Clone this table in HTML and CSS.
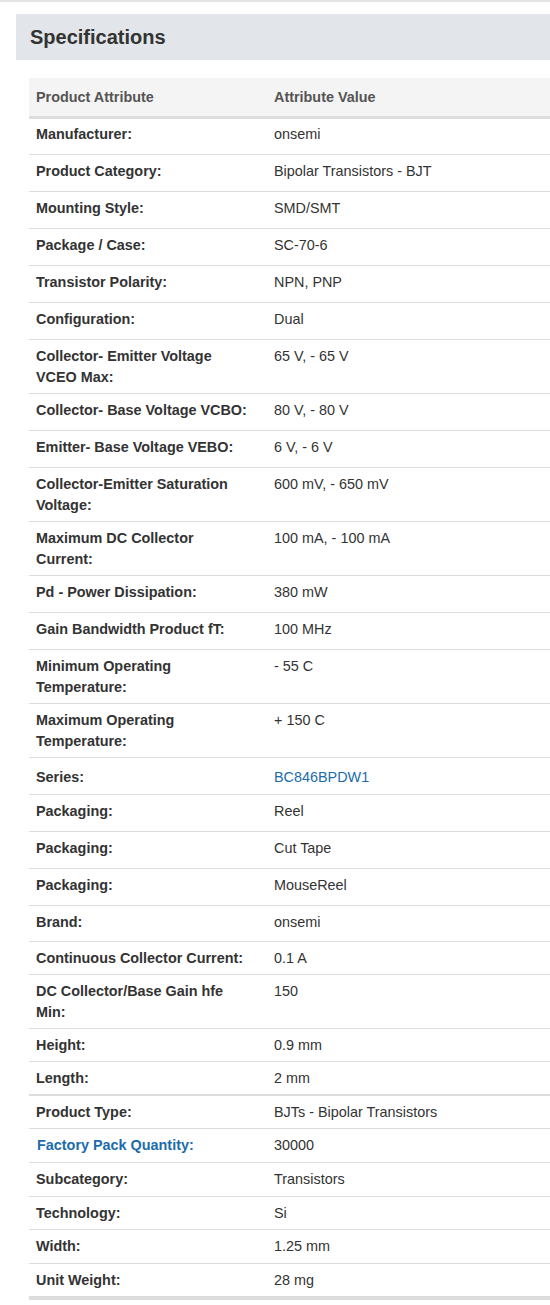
FILE: index.html
```html
<!DOCTYPE html>
<html lang="en">
<head>
<meta charset="utf-8">
<title>Specifications</title>
<link rel="stylesheet" href="styles.css">
</head>
<body>
<div class="topline"></div>
<section class="specs">
  <h2 class="specs-title">Specifications</h2>
  <table class="spec-table">
    <thead>
      <tr><th class="c1">Product Attribute</th><th class="c2">Attribute Value</th></tr>
    </thead>
    <tbody>
      <tr class="tall first"><td class="c1">Manufacturer:</td><td>onsemi</td></tr>
      <tr class="tall"><td class="c1">Product Category:</td><td>Bipolar Transistors - BJT</td></tr>
      <tr class="tall"><td class="c1">Mounting Style:</td><td>SMD/SMT</td></tr>
      <tr class="tall"><td class="c1">Package / Case:</td><td>SC-70-6</td></tr>
      <tr class="tall"><td class="c1">Transistor Polarity:</td><td>NPN, PNP</td></tr>
      <tr class="tall"><td class="c1">Configuration:</td><td>Dual</td></tr>
      <tr><td class="c1">Collector- Emitter Voltage VCEO Max:</td><td>65 V, - 65 V</td></tr>
      <tr class="tall"><td class="c1">Collector- Base Voltage VCBO:</td><td>80 V, - 80 V</td></tr>
      <tr class="tall"><td class="c1">Emitter- Base Voltage VEBO:</td><td>6 V, - 6 V</td></tr>
      <tr><td class="c1">Collector-Emitter Saturation Voltage:</td><td>600 mV, - 650 mV</td></tr>
      <tr><td class="c1">Maximum DC Collector Current:</td><td>100 mA, - 100 mA</td></tr>
      <tr class="tall"><td class="c1">Pd - Power Dissipation:</td><td>380 mW</td></tr>
      <tr class="tall"><td class="c1">Gain Bandwidth Product fT:</td><td>100 MHz</td></tr>
      <tr><td class="c1">Minimum Operating Temperature:</td><td>- 55 C</td></tr>
      <tr><td class="c1">Maximum Operating Temperature:</td><td>+ 150 C</td></tr>
      <tr class="series"><td class="c1">Series:</td><td><a class="link" href="#">BC846BPDW1</a></td></tr>
      <tr class="tall"><td class="c1">Packaging:</td><td>Reel</td></tr>
      <tr class="tall"><td class="c1">Packaging:</td><td>Cut Tape</td></tr>
      <tr class="tall"><td class="c1">Packaging:</td><td>MouseReel</td></tr>
      <tr class="h36"><td class="c1">Brand:</td><td>onsemi</td></tr>
      <tr><td class="c1">Continuous Collector Current:</td><td>0.1 A</td></tr>
      <tr><td class="c1">DC Collector/Base Gain hfe Min:</td><td>150</td></tr>
      <tr><td class="c1">Height:</td><td>0.9 mm</td></tr>
      <tr><td class="c1">Length:</td><td>2 mm</td></tr>
      <tr class="sep"><td class="c1">Product Type:</td><td>BJTs - Bipolar Transistors</td></tr>
      <tr class="h34"><td class="c1"><a class="link label-link" href="#">Factory Pack Quantity:</a></td><td>30000</td></tr>
      <tr class="h34"><td class="c1">Subcategory:</td><td>Transistors</td></tr>
      <tr><td class="c1">Technology:</td><td>Si</td></tr>
      <tr class="h34"><td class="c1">Width:</td><td>1.25 mm</td></tr>
      <tr class="last"><td class="c1">Unit Weight:</td><td>28 mg</td></tr>
    </tbody>
  </table>
</section>
</body>
</html>
```

FILE: styles.css
```css
html, body {
  margin: 0;
  padding: 0;
  background: #fff;
  overflow: hidden;
}

body {
  font-family: "Liberation Sans", Arial, sans-serif;
  font-size: 14.4px;
  color: #333;
  width: 550px;
}

.topline {
  height: 2px;
  background: #e4e4e4;
}

.specs {
  margin-top: 12px;
  margin-left: 16px;
  width: 560px;
}

.specs-title {
  margin: 0;
  background: #e2e5e9;
  padding: 11px 14px;
  font-size: 20px;
  line-height: 24px;
  font-weight: bold;
  color: #333;
}

.spec-table {
  margin-top: 18px;
  margin-left: 13px;
  width: 547px;
  border-collapse: collapse;
  table-layout: fixed;
}

.spec-table th,
.spec-table td {
  box-sizing: border-box;
}

.spec-table .c1 {
  width: 238px;
}

.spec-table th {
  background: #f4f4f4;
  color: #555;
  font-weight: bold;
  text-align: left;
  padding: 9px 7px 8px;
  line-height: 21px;
  border-bottom: 3px solid #dddddd;
}

.spec-table td {
  vertical-align: top;
  padding: 6px 7px 5px;
  line-height: 21px;
  border-top: 1px solid #dddddd;
}

.spec-table tr.first td {
  border-top: none;
  padding-top: 5px;
}

.spec-table td.c1 {
  font-weight: bold;
  padding-right: 16px;
}

.spec-table tr.tall td {
  padding-bottom: 9px;
}

.spec-table tr.series td {
  padding-top: 9px;
  padding-bottom: 6px;
}

.spec-table tr.h36 td {
  padding-bottom: 8px;
}

.spec-table tr.h34 td {
  padding-bottom: 6px;
}

.spec-table tr.sep td {
  border-top: 2px solid #dddddd;
}

.spec-table tr.last td {
  border-bottom: 4px solid #dddddd;
}

.link {
  color: #1b6cab;
  text-decoration: none;
}

.label-link {
  font-weight: bold;
  padding-left: 1px;
}
```
